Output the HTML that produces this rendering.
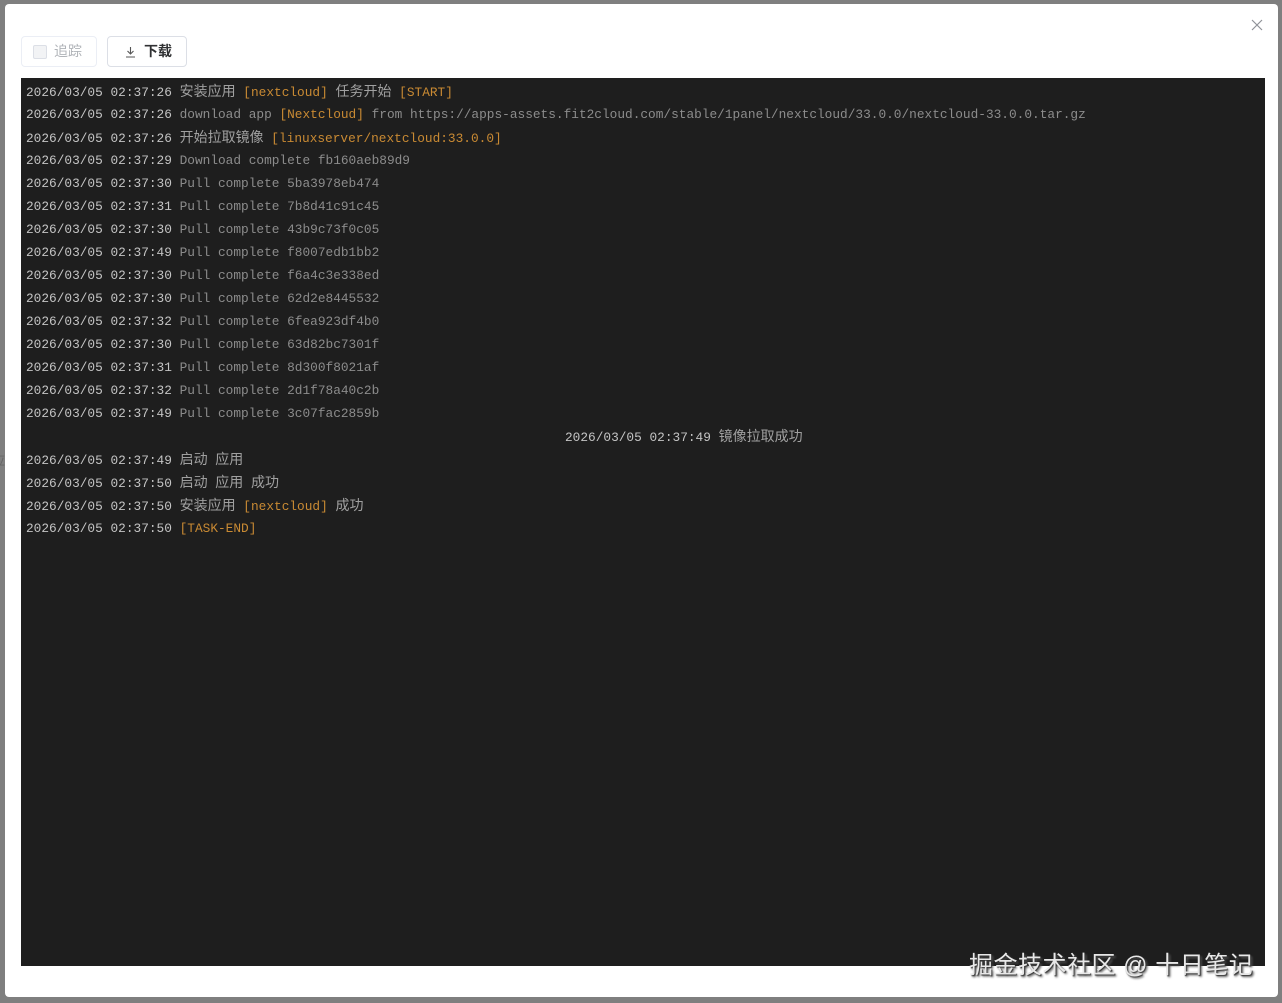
<!DOCTYPE html>
<html><head><meta charset="utf-8"><style>
html,body{margin:0;padding:0;width:1282px;height:1003px;background:#7f7f7f;overflow:hidden;position:relative;font-family:"Liberation Sans","Noto Sans CJK SC",sans-serif}
.dlg{position:absolute;left:5px;top:4px;width:1273px;height:993px;background:#fff;border-radius:4px}
.close{position:absolute;left:1251px;top:19px;width:12px;height:12px}
.btn{position:absolute;top:36px;height:31px;border:1px solid #dcdfe6;border-radius:4px;box-sizing:border-box;font-size:14px;line-height:29px;color:#303133}
.b1{left:21px;width:76px;border-color:#ebeef5;color:#b0b3b8}
.b2{left:107px;width:80px;font-weight:bold}
.cb{position:absolute;left:11px;top:8px;width:12px;height:12px;border:1px solid #dcdfe6;background:#f2f3f5;border-radius:2px}
.log{position:absolute;left:21px;top:78px;width:1244px;height:888px;background:#1e1e1e;font-family:"Liberation Mono","Noto Sans CJK SC",monospace;font-size:12.8px;color:#8c8c8c}
.l{position:absolute;left:5px;height:23px;line-height:23px;white-space:pre}
.t{color:#c4c4c4}
.o{color:#c98a33}
.c{font-family:"Noto Sans CJK SC",sans-serif;font-size:14px;color:#a0a0a0}
.wm{position:absolute;left:969px;top:945px;font-size:24px;letter-spacing:0.5px;color:#e8e8e8;text-shadow:1px 1px 1px #333,2px 2px 2px #555}
.side{position:absolute;left:0;top:450px;width:5px;height:20px;overflow:hidden;font-size:13px;color:#666}
</style></head><body>
<div class="side"><span style="margin-left:-8px">应</span></div>
<div class="dlg"></div>
<svg class="close" viewBox="0 0 12 12"><path d="M1 1L11 11M11 1L1 11" stroke="#909399" stroke-width="1.2"/></svg>
<div class="btn b1"><span class="cb"></span><span style="position:absolute;left:32px">追踪</span></div>
<div class="btn b2"><svg style="position:absolute;left:17px;top:9px" width="11" height="12" viewBox="0 0 11 12"><path d="M5.5 1V8M2.5 5L5.5 8L8.5 5M1 11H10" stroke="#555" stroke-width="1.1" fill="none"/></svg><span style="position:absolute;left:36px">下载</span></div>
<div class="log">
<div class="l" style="top:2px"><span class="t">2026/03/05 02:37:26</span> <span class="c">安装应用</span> <span class="o">[nextcloud]</span> <span class="c">任务开始</span> <span class="o">[START]</span></div>
<div class="l" style="top:25px"><span class="t">2026/03/05 02:37:26</span> download app <span class="o">[Nextcloud]</span> from https://apps-assets.fit2cloud.com/stable/1panel/nextcloud/33.0.0/nextcloud-33.0.0.tar.gz</div>
<div class="l" style="top:48px"><span class="t">2026/03/05 02:37:26</span> <span class="c">开始拉取镜像</span> <span class="o">[linuxserver/nextcloud:33.0.0]</span></div>
<div class="l" style="top:71px"><span class="t">2026/03/05 02:37:29</span> Download complete fb160aeb89d9</div>
<div class="l" style="top:94px"><span class="t">2026/03/05 02:37:30</span> Pull complete 5ba3978eb474</div>
<div class="l" style="top:117px"><span class="t">2026/03/05 02:37:31</span> Pull complete 7b8d41c91c45</div>
<div class="l" style="top:140px"><span class="t">2026/03/05 02:37:30</span> Pull complete 43b9c73f0c05</div>
<div class="l" style="top:163px"><span class="t">2026/03/05 02:37:49</span> Pull complete f8007edb1bb2</div>
<div class="l" style="top:186px"><span class="t">2026/03/05 02:37:30</span> Pull complete f6a4c3e338ed</div>
<div class="l" style="top:209px"><span class="t">2026/03/05 02:37:30</span> Pull complete 62d2e8445532</div>
<div class="l" style="top:232px"><span class="t">2026/03/05 02:37:32</span> Pull complete 6fea923df4b0</div>
<div class="l" style="top:255px"><span class="t">2026/03/05 02:37:30</span> Pull complete 63d82bc7301f</div>
<div class="l" style="top:278px"><span class="t">2026/03/05 02:37:31</span> Pull complete 8d300f8021af</div>
<div class="l" style="top:301px"><span class="t">2026/03/05 02:37:32</span> Pull complete 2d1f78a40c2b</div>
<div class="l" style="top:324px"><span class="t">2026/03/05 02:37:49</span> Pull complete 3c07fac2859b</div>
<div class="l" style="top:347px;left:544px"><span class="t">2026/03/05 02:37:49</span> <span class="c">镜像拉取成功</span></div>
<div class="l" style="top:370px"><span class="t">2026/03/05 02:37:49</span> <span class="c">启动</span> <span class="c">应用</span></div>
<div class="l" style="top:393px"><span class="t">2026/03/05 02:37:50</span> <span class="c">启动</span> <span class="c">应用</span> <span class="c">成功</span></div>
<div class="l" style="top:416px"><span class="t">2026/03/05 02:37:50</span> <span class="c">安装应用</span> <span class="o">[nextcloud]</span> <span class="c">成功</span></div>
<div class="l" style="top:439px"><span class="t">2026/03/05 02:37:50</span> <span class="o">[TASK-END]</span></div>
</div>
<div class="wm">掘金技术社区 @ 十日笔记</div>
</body></html>
